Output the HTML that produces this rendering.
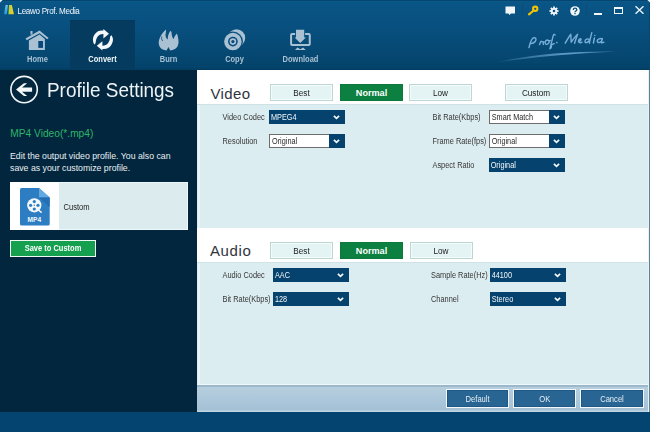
<!DOCTYPE html>
<html><head><meta charset="utf-8">
<style>
*{margin:0;padding:0;box-sizing:border-box}
html,body{width:650px;height:432px;overflow:hidden;background:#034470;font-family:"Liberation Sans",sans-serif}
.a{position:absolute}
.t{display:inline-block;transform:scaleY(1.15);white-space:nowrap}
#hdr{left:0;top:0;width:650px;height:70px;background:linear-gradient(#064570 0px,#064570 1px,#0a5888 1px,#0a5888 2px,#095585 3px,#084f7e 30px,#05466f 60px,#04436b 68px,#033d61 69px,#033d61 70px)}
.title{left:17.5px;top:4.6px;font-size:8.1px;letter-spacing:-0.32px;color:#f0f6fa;line-height:11px;white-space:nowrap;transform:scaleY(1.15);transform-origin:0 0}
.nav{top:19px;width:65px;height:50px;text-align:center}
.nav .lbl{position:absolute;left:0;right:0;top:36px;font-size:7.5px;font-weight:bold;color:#a9c1d2;line-height:9px;transform:scaleY(1.12)}
.nav.on{background:linear-gradient(transparent 1px,#04385c 1px,#053b5f 3px)}
.nav.on .lbl{color:#f4f8fa}
#left{left:0;top:70px;width:197px;height:342px;background:#02263d}
#main{left:197px;top:70px;width:451px;height:315px;background:#dcedf1}
.strip{left:0;width:451px;background:#fff}
.sec{font-size:15px;letter-spacing:0.35px;color:#30353c;line-height:18px;white-space:nowrap}
.qb{width:63px;height:17px;background:#e4f4f5;border:1px solid #bdd6d4;box-shadow:inset 0 0 0 1px #f3fbfb;font-size:8.2px;color:#1a1a1a;text-align:center;line-height:17.6px}
.qb .t{transform:scaleY(1.2)}
.qb.on{background:#0c8040;border-color:#0b7a3c;box-shadow:none;color:#fff;font-weight:bold;font-size:9.1px;line-height:17px}
.qb.on .t{transform:none}
.lab{font-size:7.4px;color:#353535;line-height:12px;white-space:nowrap}
.dd{background:#05426d;color:#f4f8fb;font-size:7.3px;line-height:16px;padding-left:2px;white-space:nowrap}
.dd .in{position:absolute;left:0;top:0;width:60px;height:100%;background:#fff;border:1px solid #6d6d6d;border-right:none;color:#2a2a2a;padding-left:2px;line-height:14px}
.dd .cv{position:absolute;right:5px;top:5px}
#bar{left:197px;top:384px;width:451px;height:28px;background:linear-gradient(#eef9fb 0px,#eef9fb 1px,#9ab5c8 1px,#9fb9cc 2.5px,#b6cfdf 3.5px,#a4c1d6 26px,#bed4e1 27px,#c3d7e3 28px)}
.bb{top:389.2px;width:63.2px;height:18.6px;background:#286592;border:1.2px solid #f4f8fa;box-shadow:inset 0 0 0 0.8px #1c5584;color:#e6eef4;font-size:7.6px;text-align:center;line-height:19px}
#foot{left:0;top:412px;width:650px;height:20px;background:#034470}
</style></head><body>
<div id="hdr" class="a">
  <!-- logo -->
  <svg class="a" style="left:4px;top:5px" width="11" height="10" viewBox="0 0 11 10">
    <defs><linearGradient id="lg1" x1="0" y1="0" x2="0" y2="1"><stop offset="0" stop-color="#6cc6ee"/><stop offset="1" stop-color="#1d96d6"/></linearGradient>
    <linearGradient id="lg2" x1="0" y1="0" x2="1" y2="0"><stop offset="0" stop-color="#b8d040"/><stop offset="1" stop-color="#f2cf1c"/></linearGradient></defs>
    <path d="M1.6 0 L3.9 0 L2.9 9.3 L0 9.3 Z" fill="url(#lg1)"/>
    <path d="M5 0 L7.9 0 L9.9 9.3 L4.4 9.3 Z" fill="url(#lg2)"/>
  </svg>
  <div class="a title">Leawo Prof. Media</div>
  <!-- right icons -->
  <svg class="a" style="left:505px;top:6px" width="11" height="10" viewBox="0 0 11 10">
    <path d="M0.5 0.5 H10 V7.5 H6 L4.5 9 L3.5 7.5 H0.5 Z" fill="#f2f6f8"/>
  </svg>
  <div class="a" style="left:522px;top:4px;width:1px;height:13px;background:#0b4d79"></div>
  <svg class="a" style="left:527px;top:4px" width="13" height="13" viewBox="0 0 13 13">
    <circle cx="8.2" cy="4.8" r="2.15" fill="none" stroke="#f3c300" stroke-width="2.1"/>
    <path d="M6.4 6.7 L2 10.4" stroke="#f3c300" stroke-width="2.1" stroke-linecap="round"/>
  </svg>
  <svg class="a" style="left:549px;top:5.5px" width="10" height="10" viewBox="0 0 10 10">
    <g fill="#f2f6f8">
      <circle cx="5" cy="5" r="3.1"/>
      <rect x="4.1" y="0.5" width="1.8" height="9"/>
      <rect x="0.5" y="4.1" width="9" height="1.8"/>
      <rect x="4.1" y="0.5" width="1.8" height="9" transform="rotate(45 5 5)"/>
      <rect x="4.1" y="0.5" width="1.8" height="9" transform="rotate(-45 5 5)"/>
    </g>
    <circle cx="5" cy="5" r="1.3" fill="#0a4f7f"/>
  </svg>
  <svg class="a" style="left:569.8px;top:5.6px" width="10" height="10" viewBox="0 0 10 10">
    <circle cx="5" cy="5" r="4.8" fill="#f2f6f8"/>
    <path d="M3.3 3.9 Q3.3 2.2 5 2.2 Q6.8 2.2 6.8 3.8 Q6.8 4.8 5.5 5.2 Q5 5.5 5 6.2" fill="none" stroke="#0a4f7f" stroke-width="1.3"/>
    <rect x="4.35" y="6.9" width="1.3" height="1.3" fill="#0a4f7f"/>
  </svg>
  <div class="a" style="left:586px;top:4px;width:1px;height:13px;background:#0b4d79"></div>
  <div class="a" style="left:594px;top:13px;width:8px;height:2px;background:#f2f6f8"></div>
  <div class="a" style="left:614px;top:7px;width:9px;height:7px;border:1.3px solid #f2f6f8;border-top-width:2px"></div>
  <svg class="a" style="left:635px;top:6px" width="9" height="8" viewBox="0 0 9 8">
    <path d="M0.5 0.2 L8.5 7.8 M8.5 0.2 L0.5 7.8" stroke="#f2f6f8" stroke-width="1.3"/>
  </svg>

  <!-- nav -->
  <div class="a nav" style="left:5px">
    <svg class="a" style="left:18px;top:7px" width="27" height="27" viewBox="0 0 27 27">
      <path d="M2.5 12.6 L16.5 4.6 L25.6 11.9 L24.3 13.2 L16.5 7.2 L3.8 14.2 Z" fill="#a9c1d2"/>
      <rect x="7.5" y="5" width="2" height="3.6" fill="#a9c1d2"/>
      <path d="M5.9 14.6 L16.5 8.6 L21.9 12.9 V24.1 H5.9 Z" fill="#a9c1d2"/>
      <rect x="15.3" y="15" width="4.7" height="6.9" fill="#07487a"/>
    </svg>
    <div class="lbl">Home</div>
  </div>
  <div class="a nav on" style="left:70px">
    <svg class="a" style="left:20px;top:7px" width="27" height="27" viewBox="0 0 27 27">
      <path id="carr" d="M4.2 18.4 A9.2 9.2 0 0 1 12.9 4.6 L13.4 4.6 L13.4 3.1 L19 7.8 L13.4 12.4 L13.4 7.9 L12.9 7.9 C9.2 7.9 5.9 10.8 5.6 17.3 Z" fill="#f4f8fa"/>
      <path d="M4.2 18.4 A9.2 9.2 0 0 1 12.9 4.6 L13.4 4.6 L13.4 3.1 L19 7.8 L13.4 12.4 L13.4 7.9 L12.9 7.9 C9.2 7.9 5.9 10.8 5.6 17.3 Z" fill="#f4f8fa" transform="rotate(180 12.9 13.8)"/>
    </svg>
    <div class="lbl">Convert</div>
  </div>
  <div class="a nav" style="left:135px">
    <svg class="a" style="left:20px;top:7px" width="27" height="27" viewBox="0 0 27 27">
      <path d="M13.4 20.9 L11.6 24.4 C9 24.3 5.5 23 4.4 20 C3.6 18 3.5 16 4.2 13.5 C5 10.5 7.5 6.5 10.9 3.4 C11.5 5.5 10.2 8 10.6 10 C10.8 11.5 11.5 12.8 12.8 13.4 C12.6 10.5 13.4 7 15.6 4.7 C17 6 16.6 8 16.9 9.5 C17.2 11 18 12.5 18.75 13.1 C19 11 20.5 9 21.9 7.5 C22.5 9 23 10.5 23.1 11.9 C23.6 14 23.6 16 23.4 17.5 C23 19.5 22.5 20.5 21.9 21.25 C20.5 23 18.5 24 15.3 24.4 Z" fill="#a9c1d2"/>
      <path d="M6.6 10.6 Q6.1 13 7.6 15" fill="none" stroke="#07497b" stroke-width="0.8"/>
    </svg>
    <div class="lbl" style="left:1.5px;right:-0.5px">Burn</div>
  </div>
  <div class="a nav" style="left:201px">
    <svg class="a" style="left:20px;top:7px" width="27" height="27" viewBox="0 0 27 27">
      <defs><mask id="cm"><rect width="27" height="27" fill="#fff"/><circle cx="11.9" cy="15.6" r="10" fill="#000"/></mask></defs>
      <circle cx="15.5" cy="12" r="8.7" fill="#a9c1d2" mask="url(#cm)"/>
      <circle cx="11.9" cy="15.6" r="8.75" fill="#a9c1d2"/>
      <circle cx="11.9" cy="15.6" r="4.85" fill="#08497b"/>
      <circle cx="11.9" cy="15.6" r="3.3" fill="#a9c1d2"/>
      <circle cx="11.9" cy="15.6" r="1.6" fill="#08497b"/>
    </svg>
    <div class="lbl" style="left:1.5px;right:-0.5px">Copy</div>
  </div>
  <div class="a nav" style="left:267px">
    <svg class="a" style="left:20px;top:7px" width="27" height="27" viewBox="0 0 27 27">
      <path d="M8.1 7.9 H5.1 Q4.1 7.9 4.1 8.9 V18 Q4.1 19 5.1 19 H21.75 Q22.75 19 22.75 18 V8.9 Q22.75 7.9 21.75 7.9 H18.1" fill="none" stroke="#a9c1d2" stroke-width="2"/>
      <path d="M9 3.75 H17.2 V11.6 H19 L13.25 16.9 L7.5 11.6 H9 Z" fill="#a9c1d2"/>
      <path d="M8 24 L10.5 21.5 L13.3 23.2 L16.1 21.5 L18.8 24 Z" fill="#a9c1d2"/>
    </svg>
    <div class="lbl" style="left:1.5px;right:-0.5px">Download</div>
  </div>
  <!-- prof media -->
  <svg class="a" style="left:524px;top:30px" width="84" height="22" viewBox="0 0 84 22">
    <g fill="none" stroke="#76aed8" stroke-width="1.4" stroke-linecap="round" stroke-linejoin="round">
      <path d="M5 17.6 C5.8 14 7 10.5 8.4 8.6 C9.4 7.4 12.2 7.2 12 9.4 C11.8 11.6 9.6 13.2 7 13.6"/>
      <path d="M15.6 14.6 C16 13.2 16.4 11.6 17.2 11.2 C17.8 11.8 18.4 12.2 20 11.6 C19.2 12.6 18.8 13.6 19.4 14.4"/>
      <path d="M23.4 10 C21.8 10 21 11.8 21.2 13.2 C21.4 14.6 23.2 14.8 24.4 13.6 C25.6 12.4 25.4 10.4 23.4 10 C24.4 10.6 25.4 10.8 26.4 10.6"/>
      <path d="M31.2 5 C30.6 4 29.6 4.4 29.2 5.6 C28.2 9.5 27 14.5 25.9 18.8 C27.2 18.4 27.8 16.4 27.2 15.2 C28.2 14.6 29.2 14 30.2 13.6"/>
      <path d="M41.2 13.2 C43 10 45 6.5 46.8 4.2 C47 7 47 10 47.2 12.2 C49 9.5 51 6.5 53.6 4.2 C52.5 7.2 51.4 10.2 50.6 13.2"/>
      <path d="M54.4 11.8 C55.8 11.2 57.6 10 57 9 C56.4 8.2 54.6 9.4 54.5 11 C54.4 12.8 56.4 13.2 58 12.2"/>
      <path d="M65 9.4 C63.6 8.2 61.2 9.2 61 11.2 C60.8 13.2 63 13.2 64.8 11 M67.8 2.8 C66.8 6.5 65.8 10 65.4 13.2"/>
      <path d="M70.4 8 L69.4 13"/>
      <path d="M77.6 9 C76.5 8 73.6 9 73.2 11 C73 12.8 75.4 13.2 77.2 11.4 M78.4 8.6 C77.8 10 77.4 11.4 77.6 12.8 C78.4 13 79.2 12.6 80 12.2"/>
    </g>
    <circle cx="32.8" cy="12.5" r="0.85" fill="#76aed8"/>
    <circle cx="70.8" cy="5.6" r="0.75" fill="#76aed8"/>
  </svg>
  <svg class="a" style="left:495px;top:48px" width="125" height="16" viewBox="0 0 125 16">
    <defs><linearGradient id="sw" x1="0" x2="1"><stop offset="0" stop-color="#5d9ccc" stop-opacity="0.2"/><stop offset="0.6" stop-color="#6aa8d6" stop-opacity="0.9"/><stop offset="1" stop-color="#6aa8d6" stop-opacity="0.5"/></linearGradient></defs>
    <path d="M3 14 Q50 3 121 3.5 Q60 6 3 14 Z" fill="url(#sw)"/>
  </svg>
</div>

<div id="left" class="a">
  <svg class="a" style="left:8px;top:4px" width="32" height="32" viewBox="0 0 32 32">
    <circle cx="16.1" cy="15.6" r="13.2" fill="none" stroke="#f4f7f9" stroke-width="1.6"/>
    <path d="M8 15.6 L15.9 9.3 L19.2 9.3 L14 13.4 L24.1 13.4 L24.1 17.8 L14 17.8 L19.2 21.9 L15.9 21.9 Z" fill="#f4f7f9"/>
  </svg>
  <div class="a" style="left:47px;top:9px;font-size:18.9px;color:#eef3f6;line-height:22px;white-space:nowrap;transform:scaleY(1.07);transform-origin:0 2px">Profile Settings</div>
  <div class="a" style="left:10.3px;top:58px;font-size:10.2px;color:#2fb56a;line-height:12px;white-space:nowrap">MP4 Video(*.mp4)</div>
  <div class="a" style="left:10px;top:80px;font-size:8.75px;color:#e9eff3;line-height:12.4px;white-space:nowrap">Edit the output video profile. You also can<br>save as your customize profile.</div>
  <div class="a" style="left:10px;top:112px;width:178px;height:47.6px;background:#dcebee;border:1px solid #eef7f9"></div>
  <div class="a" style="left:10px;top:112px;width:48.6px;height:47.6px;background:#fff"></div>
  <svg class="a" style="left:20px;top:117.6px" width="30" height="38" viewBox="0 0 30 38">
    <path d="M1.5 0 H19 L29.7 9.6 V36.1 Q29.7 37.6 28.2 37.6 H1.5 Q0 37.6 0 36.1 V1.5 Q0 0 1.5 0 Z" fill="#2d7dc3"/>
    <path d="M19 0 L29.7 9.6 H19 Z" fill="#62a9e2"/>
    <path d="M19 9.6 L29.7 9.6 V19 Z" fill="#246fb3"/>
    <circle cx="14.3" cy="17.3" r="7.1" fill="#f4f8fb"/>
    <g fill="#2d7dc3">
      <circle cx="14.3" cy="13.6" r="1.6"/><circle cx="14.3" cy="21" r="1.6"/>
      <circle cx="10.6" cy="17.3" r="1.6"/><circle cx="18" cy="17.3" r="1.6"/>
      <circle cx="14.3" cy="17.3" r="0.7"/>
    </g>
    <path d="M18.8 22.2 L21.6 24.6" stroke="#f4f8fb" stroke-width="1.5"/>
    <text x="14.4" y="34" font-family="Liberation Sans" font-weight="bold" font-size="6.6" fill="#f4f8fb" text-anchor="middle">MP4</text>
  </svg>
  <div class="a" style="left:63.5px;top:133px;font-size:7.6px;color:#1e1e1e;line-height:10px"><span class="t">Custom</span></div>
  <div class="a" style="left:10px;top:170px;width:86px;height:17px;background:#15a04f;border:1.3px solid #f0f6f2;color:#fff;font-weight:bold;font-size:7.5px;line-height:16px;text-align:center"><span class="t">Save to Custom</span></div>
</div>
<div id="main" class="a">
<div class="a" style="left:1px;top:0;width:2px;height:315px;background:#eaf6f9"></div>
<div class="a strip" style="top:0;height:34px"></div>
<div class="a" style="left:0;top:34px;width:451px;height:1px;background:#cfe2e6"></div>
<div class="a sec" style="left:13.5px;top:15px">Video</div>
<div class="a qb" style="left:73px;top:14px"><span class="t">Best</span></div>
<div class="a qb on" style="left:143px;top:14px"><span class="t">Normal</span></div>
<div class="a qb" style="left:212px;top:14px"><span class="t">Low</span></div>
<div class="a qb" style="left:307.5px;top:14px"><span class="t">Custom</span></div>
<div class="a lab" style="left:25.5px;top:41.5px"><span class="t">Video Codec</span></div>
<div class="a dd" style="left:72px;top:40px;width:76px;height:14px"><span class="t">MPEG4</span><svg class="cv" width="7" height="5" viewBox="0 0 7 5"><path d="M0.9 0.9 L3.5 3.3 L6.1 0.9" fill="none" stroke="#f2f8fb" stroke-width="1.8"/></svg></div>
<div class="a lab" style="left:25.5px;top:65.5px"><span class="t">Resolution</span></div>
<div class="a dd" style="left:72px;top:64px;width:76px;height:14px"><div class="in"><span class="t">Original</span></div><svg class="cv" width="7" height="5" viewBox="0 0 7 5"><path d="M0.9 0.9 L3.5 3.3 L6.1 0.9" fill="none" stroke="#f2f8fb" stroke-width="1.8"/></svg></div>
<div class="a lab" style="left:235.5px;top:41.5px"><span class="t">Bit Rate(Kbps)</span></div>
<div class="a dd" style="left:291.7px;top:40px;width:76px;height:14px"><div class="in"><span class="t">Smart Match</span></div><svg class="cv" width="7" height="5" viewBox="0 0 7 5"><path d="M0.9 0.9 L3.5 3.3 L6.1 0.9" fill="none" stroke="#f2f8fb" stroke-width="1.8"/></svg></div>
<div class="a lab" style="left:235.5px;top:65.5px"><span class="t">Frame Rate(fps)</span></div>
<div class="a dd" style="left:291.7px;top:64px;width:76px;height:14px"><div class="in"><span class="t">Original</span></div><svg class="cv" width="7" height="5" viewBox="0 0 7 5"><path d="M0.9 0.9 L3.5 3.3 L6.1 0.9" fill="none" stroke="#f2f8fb" stroke-width="1.8"/></svg></div>
<div class="a lab" style="left:235.5px;top:89.5px"><span class="t">Aspect Ratio</span></div>
<div class="a dd" style="left:291.7px;top:88px;width:76px;height:14px"><span class="t">Original</span><svg class="cv" width="7" height="5" viewBox="0 0 7 5"><path d="M0.9 0.9 L3.5 3.3 L6.1 0.9" fill="none" stroke="#f2f8fb" stroke-width="1.8"/></svg></div>
<div class="a strip" style="top:157.5px;height:34.5px"></div>
<div class="a" style="left:0;top:192px;width:451px;height:1px;background:#cfe2e6"></div>
<div class="a sec" style="left:13px;top:172px;letter-spacing:0.6px">Audio</div>
<div class="a qb" style="left:73px;top:172px"><span class="t">Best</span></div>
<div class="a qb on" style="left:143px;top:172px"><span class="t">Normal</span></div>
<div class="a qb" style="left:212.5px;top:172px"><span class="t">Low</span></div>
<div class="a lab" style="left:25.5px;top:199.5px"><span class="t">Audio Codec</span></div>
<div class="a dd" style="left:76px;top:198px;width:76px;height:14px"><span class="t">AAC</span><svg class="cv" width="7" height="5" viewBox="0 0 7 5"><path d="M0.9 0.9 L3.5 3.3 L6.1 0.9" fill="none" stroke="#f2f8fb" stroke-width="1.8"/></svg></div>
<div class="a lab" style="left:25.5px;top:223.5px"><span class="t">Bit Rate(Kbps)</span></div>
<div class="a dd" style="left:76px;top:222px;width:76px;height:14px"><span class="t">128</span><svg class="cv" width="7" height="5" viewBox="0 0 7 5"><path d="M0.9 0.9 L3.5 3.3 L6.1 0.9" fill="none" stroke="#f2f8fb" stroke-width="1.8"/></svg></div>
<div class="a lab" style="left:234px;top:199.5px"><span class="t">Sample Rate(Hz)</span></div>
<div class="a dd" style="left:292.7px;top:198px;width:76px;height:14px"><span class="t">44100</span><svg class="cv" width="7" height="5" viewBox="0 0 7 5"><path d="M0.9 0.9 L3.5 3.3 L6.1 0.9" fill="none" stroke="#f2f8fb" stroke-width="1.8"/></svg></div>
<div class="a lab" style="left:234px;top:223.5px"><span class="t">Channel</span></div>
<div class="a dd" style="left:292.7px;top:222px;width:76px;height:14px"><span class="t">Stereo</span><svg class="cv" width="7" height="5" viewBox="0 0 7 5"><path d="M0.9 0.9 L3.5 3.3 L6.1 0.9" fill="none" stroke="#f2f8fb" stroke-width="1.8"/></svg></div>
</div>
<div class="a" style="left:648px;top:70px;width:1px;height:342px;background:#e6f4f7"></div>
<div class="a" style="left:649px;top:70px;width:1px;height:342px;background:#5f8196"></div>
<div class="a" style="left:649px;top:0;width:1px;height:70px;background:#084670"></div>
<svg class="a" style="left:641px;top:424px" width="9" height="8" viewBox="0 0 9 8"><g fill="#c9d9e4"><rect x="5" y="1" width="1" height="1"/><rect x="7" y="1" width="1" height="1"/><rect x="3" y="3" width="1" height="1"/><rect x="5" y="3" width="1" height="1"/><rect x="7" y="3" width="1" height="1"/><rect x="1" y="5" width="1" height="1"/><rect x="3" y="5" width="1" height="1"/><rect x="5" y="5" width="1" height="1"/><rect x="7" y="5" width="1" height="1"/></g></svg>
<div id="bar" class="a"></div>
<div class="a bb" style="left:446px"><span class="t">Default</span></div>
<div class="a bb" style="left:513.2px"><span class="t">OK</span></div>
<div class="a bb" style="left:580.4px"><span class="t">Cancel</span></div>
<div id="foot" class="a"></div>
<svg class="a" style="left:0;top:0" width="3" height="3" viewBox="0 0 3 3"><path d="M0 0 H2.6 L0 2.6 Z" fill="#e8f4f8"/></svg>
<svg class="a" style="left:647px;top:0" width="3" height="3" viewBox="0 0 3 3"><path d="M0.4 0 H3 V2.6 Z" fill="#e8f4f8"/></svg>
</body></html>
